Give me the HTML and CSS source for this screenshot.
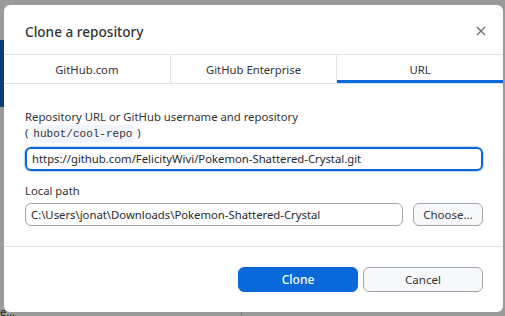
FILE: index.html
```html
<!DOCTYPE html>
<html lang="en">
<head>
  <meta charset="UTF-8">
  <title>Clone a repository</title>
  <link rel="stylesheet" href="styles.css">
</head>
<body>
  <div class="backdrop">
    <span class="behind-text">e...</span>
    <div class="dialog">
      <div class="dialog-header">
        <h1>Clone a repository</h1>
        <span class="close">
          <svg width="10" height="10" viewBox="0 0 10 10"><path d="M1 1L9 9M9 1L1 9" stroke="#6a737d" stroke-width="1.4"/></svg>
        </span>
      </div>
      <div class="tabs">
        <div class="tab">GitHub.com</div>
        <div class="tab">GitHub Enterprise</div>
        <div class="tab active">URL</div>
      </div>
      <div class="dialog-body">
        <div class="field">
          <label class="label">Repository URL or GitHub username and repository<br>( <code>hubot/cool-repo</code> )</label>
          <div class="input focused">https://github.com/FelicityWivi/Pokemon-Shattered-Crystal.git</div>
        </div>
        <div class="field">
          <label class="label short">Local path</label>
          <div class="row">
            <div class="input grow">C:\Users\jonat\Downloads\Pokemon-Shattered-Crystal</div>
            <button class="btn small">Choose...</button>
          </div>
        </div>
      </div>
      <div class="dialog-footer">
        <button class="btn primary">Clone</button>
        <button class="btn">Cancel</button>
      </div>
    </div>
  </div>
</body>
</html>
```
FILE: styles.css
```css
body{
  margin:0;
  font-family:"Noto Sans","Liberation Sans",sans-serif;
  font-size:11.3px;
  color:#24292e;
}
.backdrop{
  width:505px;
  height:316px;
  box-sizing:border-box;
  padding:5px 2px 0 4px;
  position:relative;
  overflow:hidden;
  background:
    linear-gradient(#0e3d78,#0e3d78) 0 40px/4px 67px no-repeat,
    linear-gradient(#7a7a7a,#7a7a7a) 241px 312px/1px 4px no-repeat,
    #9a9a9a;
}
.behind-text{
  position:absolute;
  left:0;
  top:305px;
  font-size:11px;
  line-height:13px;
  color:#222;
}
.dialog{
  position:relative;
  height:307px;
  background:#fff;
  border-radius:6px;
  display:flex;
  flex-direction:column;
  overflow:hidden;
}
.dialog-header{
  height:49px;
  display:flex;
  align-items:center;
  justify-content:space-between;
  padding:0 17px 0 21px;
  border-bottom:1px solid #e1e4e8;
}
.dialog-header h1{
  margin:0;
  font-size:13.6px;
  font-weight:500;
  color:#333;
  padding-top:3px;
}
.close{
  display:flex;
  padding-top:2px;
}
.tabs{
  display:flex;
  height:28px;
  border-bottom:1px solid #e1e4e8;
}
.tab{
  flex:1;
  display:flex;
  align-items:center;
  justify-content:center;
  border-right:1px solid #e1e4e8;
  color:#333;
  box-sizing:border-box;
  padding-top:1px;
}
.tab:last-child{
  border-right:none;
}
.tab.active{
  border-bottom:3px solid #0969da;
  padding-top:4px;
}
.dialog-body{
  padding:25px 20px 20px 21px;
  display:flex;
  flex-direction:column;
  gap:12px;
  border-bottom:1px solid #e1e4e8;
}
.label{
  display:block;
  line-height:16px;
  color:#333;
  margin-bottom:5px;
}
.label.short{
  margin-bottom:4px;
}
code{
  font-family:"Liberation Mono",monospace;
  font-size:11px;
  background:#f1f5fb;
  border-radius:4px;
  padding:3px 2px;
}
.input{
  height:21px;
  line-height:21px;
  border:1px solid #9ea4ab;
  border-radius:6px;
  padding:0 5px;
  white-space:nowrap;
  overflow:hidden;
  color:#24292e;
}
.input.focused{
  border:2px solid #0969da;
  height:20px;
  line-height:20px;
  padding:0 5px;
  box-shadow:0 0 0 1px #c8dcf5;
}
.row{
  display:flex;
  gap:10px;
}
.grow{
  flex:1;
}
.btn{
  font-family:inherit;
  font-size:11.5px;
  color:#333;
  background:#f6f8fa;
  border:1px solid #9ea4ab;
  border-radius:6px;
  width:120px;
  height:25px;
  padding:0;
}
.btn.small{
  width:70px;
  height:23px;
}
.btn.primary{
  background:#0969da;
  border-color:#0969da;
  color:#fff;
  font-size:12px;
  font-weight:500;
}
.dialog-footer{
  flex:1;
  display:flex;
  justify-content:flex-end;
  align-items:center;
  gap:5px;
  padding:0 20px 0 0;
}
```
